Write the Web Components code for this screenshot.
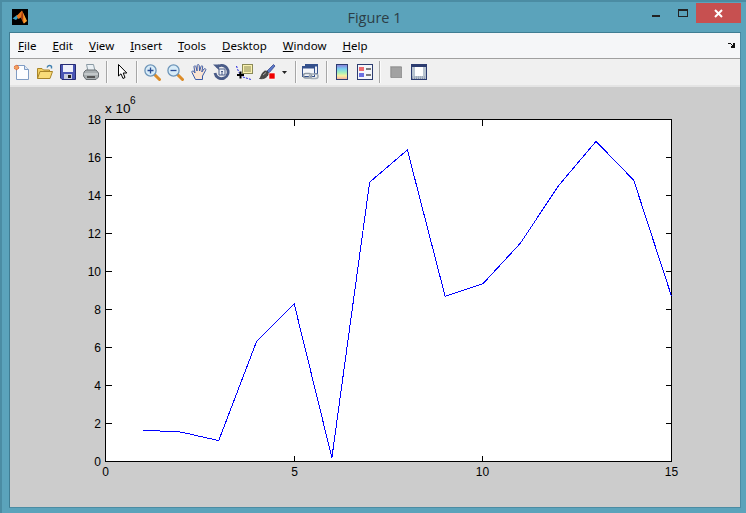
<!DOCTYPE html>
<html>
<head>
<meta charset="utf-8">
<title>Figure 1</title>
<style>
html, body { margin: 0; padding: 0; background: #5ba3bb; }
</style>
</head>
<body>
<figure-window>
  <title-bar slot="title">Figure 1</title-bar>
  <menu-bar slot="menu">
    <menu-item><u>F</u>ile</menu-item>
    <menu-item><u>E</u>dit</menu-item>
    <menu-item><u>V</u>iew</menu-item>
    <menu-item><u>I</u>nsert</menu-item>
    <menu-item><u>T</u>ools</menu-item>
    <menu-item><u>D</u>esktop</menu-item>
    <menu-item><u>W</u>indow</menu-item>
    <menu-item><u>H</u>elp</menu-item>
  </menu-bar>
  <figure-toolbar slot="tools"></figure-toolbar>
  <plot-axes></plot-axes>
</figure-window>

<script>
const windowTemplate = document.createElement('template');
windowTemplate.innerHTML = `
<style>
:host {
  display: flex;
  flex-direction: column;
  box-sizing: border-box;
  width: 746px;
  height: 513px;
  background: #5ba3bb;
  border-top: 2px solid #4b8ca3;
  border-left: 2px solid #4b8ca3;
}
#content {
  display: flex;
  flex-direction: column;
  flex: none;
  width: 730px;
  height: 474px;
  margin-left: 7px;
  border: 1px solid #3f7d93;
  border-right-color: #4b8ca3;
  border-bottom-color: #4b8ca3;
  background: #cccccc;
}
</style>
<slot name="title"></slot>
<div id="content">
  <slot name="menu"></slot>
  <slot name="tools"></slot>
  <slot></slot>
</div>
`;

class FigureWindow extends HTMLElement {
  constructor() {
    super();
    this.shadow = this.attachShadow({ mode: 'open' });
    this.shadow.appendChild(windowTemplate.content.cloneNode(true));
  }
}

const titleTemplate = document.createElement('template');
titleTemplate.innerHTML = `
<style>
:host {
  display: flex;
  flex: none;
  height: 30px;
  font: 14.5px "Open Sans", sans-serif;
  color: #2c3e46;
}
#logo { margin: 7px 0 0 10px; flex: none; }
#caption {
  flex: 1;
  padding: 6px 0 0 84px;
  text-align: center;
  line-height: 20px;
}
#buttons { display: flex; flex: none; height: 20px; margin-top: 1px; margin-right: 5px; }
#minimize { width: 26px; }
#minimize div { width: 8px; height: 2px; margin: 12px 0 0 15px; background: #222; }
#maximize { width: 33px; }
#maximize div { box-sizing: border-box; width: 10px; height: 8px; margin: 6px 0 0 15px; border: 1px solid #222; border-top-width: 2px; }
#close { display: flex; align-items: center; justify-content: center; width: 45px; background: #c75050; }
</style>
<svg id="logo" width="16" height="16" viewBox="0 0 16 16">
  <rect width="16" height="16" fill="#000"/>
  <path d="M0.5 9.5 L5 6 L7.5 7.5 L4 11 Z" fill="#3aa0c4"/>
  <path d="M4.5 7 L10 1.5 L14.5 12 L11.5 14.5 L9 8.5 L6.5 10 Z" fill="#e8781c"/>
  <path d="M10 2 L11.5 7 L10.5 12 L9 8.5 Z" fill="#a83a10"/>
  <path d="M11 3.5 L15 12 L12 14.5 L11.5 8 Z" fill="#f4a030"/>
</svg>
<div id="caption"><slot></slot></div>
<div id="buttons">
  <div id="minimize"><div></div></div>
  <div id="maximize"><div></div></div>
  <div id="close">
    <svg width="9" height="9" viewBox="0 0 9 9"><path d="M1 1 L8 8 M8 1 L1 8" stroke="#fff" stroke-width="2" fill="none"/></svg>
  </div>
</div>
`;

class TitleBar extends HTMLElement {
  constructor() {
    super();
    this.shadow = this.attachShadow({ mode: 'open' });
    this.shadow.appendChild(titleTemplate.content.cloneNode(true));
  }
}

const menuBarTemplate = document.createElement('template');
menuBarTemplate.innerHTML = `
<style>
:host {
  display: flex;
  flex: none;
  box-sizing: border-box;
  height: 26px;
  padding-left: 0;
  align-items: center;
  background: #f5f6f8;
  border-bottom: 1px solid #a0a0a0;
  font: 11.5px "Noto Sans", sans-serif;
  color: #000;
}
#dock { margin-left: auto; margin-right: 5px; }
</style>
<slot></slot>
<svg id="dock" width="7" height="5" viewBox="0 0 7 5">
  <path d="M0 0h3v1h1v1h1v-2h2v5h-4v-2h1v-1h-1v-1h-3z" fill="#111"/>
</svg>
`;

class MenuBar extends HTMLElement {
  constructor() {
    super();
    this.shadow = this.attachShadow({ mode: 'open' });
    this.shadow.appendChild(menuBarTemplate.content.cloneNode(true));
  }
}

const menuItemTemplate = document.createElement('template');
menuItemTemplate.innerHTML = `
<style>
:host { display: block; padding: 0 8px; margin-bottom: 1px; white-space: nowrap; }
</style>
<slot></slot>
`;

class MenuItem extends HTMLElement {
  constructor() {
    super();
    this.shadow = this.attachShadow({ mode: 'open' });
    this.shadow.appendChild(menuItemTemplate.content.cloneNode(true));
  }
}

const toolIconTemplate = document.createElement('template');
toolIconTemplate.innerHTML = `
<style>
:host {
  display: flex;
  flex: none;
  width: 23px;
  height: 26px;
  align-items: center;
  justify-content: center;
}
</style>
<slot></slot>
`;

class ToolIcon extends HTMLElement {
  constructor() {
    super();
    this.shadow = this.attachShadow({ mode: 'open' });
    this.shadow.appendChild(toolIconTemplate.content.cloneNode(true));
  }
}

const toolSepTemplate = document.createElement('template');
toolSepTemplate.innerHTML = `
<style>
:host {
  display: block;
  flex: none;
  box-sizing: border-box;
  width: 2px;
  height: 22px;
  margin: 2px 3px 0 var(--sep-left, 2px);
  background: #a6a6a6;
  border-right: 1px solid #fbfbfb;
}
</style>
`;

class ToolSep extends HTMLElement {
  constructor() {
    super();
    this.shadow = this.attachShadow({ mode: 'open' });
    this.shadow.appendChild(toolSepTemplate.content.cloneNode(true));
  }
}

const toolbarTemplate = document.createElement('template');
toolbarTemplate.innerHTML = `
<style>
:host {
  display: flex;
  flex: none;
  box-sizing: border-box;
  height: 28px;
  background: #f0f0f0;
  border-bottom: 2px solid;
  border-image: linear-gradient(#a0a0a0 50%, #e4e4e4 50%) 2;
}
svg { display: block; }
#bar { display: flex; height: 26px; }
</style>
<div id="bar">
  <!-- new figure -->
  <tool-icon><svg width="17" height="16" viewBox="0 0 17 16">
    <path d="M3.5 1.5 H11.5 L15.5 5.5 V15.5 H3.5 Z" fill="#fcfdff" stroke="#7f9cc4"/>
    <path d="M11.5 1.5 V5.5 H15.5" fill="#dfe8f4" stroke="#7f9cc4"/>
    <circle cx="3.5" cy="3.5" r="2.2" fill="#f0a060" stroke="#e05a28" stroke-dasharray="1.5 .8"/>
  </svg></tool-icon>
  <!-- open -->
  <tool-icon><svg width="16" height="16" viewBox="0 0 16 16">
    <path d="M10 3.5 Q11.5 0.5 14.5 2 M14.5 2 V4.5" fill="none" stroke="#3f7fb0" stroke-width="1.4"/>
    <path d="M0.5 14.5 V4.5 H5 L6.5 6 H12.5 V8" fill="#f2cf60" stroke="#a88428"/>
    <path d="M0.5 14.5 L3 7.5 H15.5 L13 14.5 Z" fill="#f9dc78" stroke="#a88428"/>
  </svg></tool-icon>
  <!-- save -->
  <tool-icon><svg width="16" height="16" viewBox="0 0 16 16">
    <path d="M0.5 0.5 H15.5 V15.5 H2 L0.5 14 Z" fill="#4a55b4" stroke="#262c74"/>
    <rect x="3" y="1" width="10" height="7" fill="#eef0fa"/>
    <rect x="4" y="10" width="8" height="5" fill="#c8cce0"/>
    <rect x="8" y="11" width="3" height="3" fill="#222"/>
  </svg></tool-icon>
  <!-- print -->
  <tool-icon><svg width="16" height="16" viewBox="0 0 16 16">
    <path d="M3.5 0.5 H10.5 L12 7 H5 Z" fill="#eaf0f4" stroke="#8a9aa4"/>
    <path d="M1 8 L3 6 H13 L15.5 9 V13 L13 15.5 H3 L0.5 12 Z" fill="#a8aeb0" stroke="#6a7074"/>
    <path d="M1 10 H15" stroke="#dfe3e4"/>
    <rect x="4" y="12" width="8" height="2" fill="#555"/>
  </svg></tool-icon>
  <tool-sep style="--sep-left: 4px"></tool-sep>
  <!-- edit plot arrow -->
  <tool-icon><svg width="11" height="16" viewBox="0 0 11 16">
    <path d="M1.5 0.5 V12 L4 9.8 L6 14.5 L8 13.5 L6.2 9 H9.8 Z" fill="#fff" stroke="#000"/>
  </svg></tool-icon>
  <tool-sep></tool-sep>
  <!-- zoom in -->
  <tool-icon><svg width="17" height="17" viewBox="0 0 17 17">
    <path d="M10 10 L15.5 15.5" stroke="#dc8c28" stroke-width="3" stroke-linecap="round"/>
    <circle cx="6.5" cy="6.5" r="5.6" fill="#d8ecf8" stroke="#6c94b8" stroke-width="1.3"/>
    <path d="M3.5 6.5 H9.5 M6.5 3.5 V9.5" stroke="#2a4c94" stroke-width="1.3"/>
  </svg></tool-icon>
  <!-- zoom out -->
  <tool-icon><svg width="17" height="17" viewBox="0 0 17 17">
    <path d="M10 10 L15.5 15.5" stroke="#dc8c28" stroke-width="3" stroke-linecap="round"/>
    <circle cx="6.5" cy="6.5" r="5.6" fill="#d8ecf8" stroke="#6c94b8" stroke-width="1.3"/>
    <path d="M3.5 6.5 H9.5" stroke="#2a4c94" stroke-width="1.3"/>
  </svg></tool-icon>
  <!-- pan -->
  <tool-icon><svg width="16" height="16" viewBox="0 0 16 16">
    <path d="M4.5 15.5 L1 8.5 C0.3 7 2 6.5 3 7.5 L4 9 L3 3 C2.8 1.6 4.6 1.4 5 2.8 L6 7 L6.2 1.5 C6.3 0.2 8 0.2 8.2 1.5 L8.6 7 L10 2.5 C10.4 1.2 12 1.7 11.7 3 L10.8 8 L13 5 C13.8 4 15.4 5 14.7 6.2 L11.5 12 V15.5 Z" fill="#fbe4d2" stroke="#3c5ca8"/>
  </svg></tool-icon>
  <!-- rotate 3d -->
  <tool-icon><svg width="17" height="16" viewBox="0 0 17 16">
    <path d="M3.6 3.6 A6.6 6.6 0 1 1 2 9" fill="none" stroke="#4a5c88" stroke-width="2.8"/>
    <path d="M0 0.5 H6 V6 Z" fill="#4a5c88"/>
    <path d="M6 5 H12 V11 H6 Z M8 7.5 H10 M9 7.5 V11" fill="#eef2f8" stroke="#4a5c88"/>
  </svg></tool-icon>
  <!-- data cursor -->
  <tool-icon><svg width="17" height="17" viewBox="0 0 17 17">
    <path d="M0.5 2 C2 7 4 11 7 13 L15 15.5" fill="none" stroke="#2020e0" stroke-dasharray="2 1.2"/>
    <rect x="6.5" y="0.5" width="10" height="9" fill="#fbf2b0" stroke="#8a8a58"/>
    <path d="M8 3 H15 M8 5 H15 M8 7 H15" stroke="#8a8a58"/>
    <path d="M1 11 H8 M4.5 7.5 V14.5" stroke="#000" stroke-width="2"/>
  </svg></tool-icon>
  <!-- brush -->
  <tool-icon><svg width="17" height="16" viewBox="0 0 17 16">
    <path d="M8 7 L14.5 0.5 L16 2 L10 9 Z" fill="#5a78c8" stroke="#2c3c80" stroke-width=".7"/>
    <path d="M0.5 14.5 C2 14 2 10 5 7.5 C7 6 10 8 9.5 10 C8.5 13 5 15.5 0.5 14.5 Z" fill="#4a4a4a" stroke="#222" stroke-width=".7"/>
    <path d="M4 11 L7 8.5" stroke="#aaa"/>
    <rect x="10" y="9" width="6" height="6" fill="#f00000" stroke="#fff" stroke-width=".6"/>
  </svg></tool-icon>
  <tool-icon style="width:11px"><svg width="5" height="3" viewBox="0 0 5 3"><path d="M0 0 H5 L2.5 3 Z" fill="#222"/></svg></tool-icon>
  <tool-sep style="--sep-left: 5px; margin-right: 2px"></tool-sep>
  <!-- link -->
  <tool-icon><svg width="17" height="16" viewBox="0 0 17 16">
    <rect x="3.5" y="0.5" width="12" height="9" fill="#eef2f8" stroke="#34508c"/>
    <rect x="3.5" y="0.5" width="12" height="2" fill="#34508c"/>
    <rect x="0.5" y="2.5" width="12" height="10" fill="#f4f6fa" stroke="#34508c"/>
    <rect x="0.5" y="2.5" width="12" height="2" fill="#34508c"/>
    <rect x="1.5" y="9.5" width="8" height="4.5" rx="2.2" fill="none" stroke="#8c98a4" stroke-width="1.6"/>
    <rect x="7.5" y="10" width="8.5" height="4.5" rx="2.2" fill="none" stroke="#a4aeb8" stroke-width="1.6"/>
  </svg></tool-icon>
  <tool-sep style="--sep-left: 4px; margin-right: 2px"></tool-sep>
  <!-- colorbar -->
  <tool-icon><svg width="12" height="16" viewBox="0 0 12 16">
    <defs><linearGradient id="cbar" x1="0" y1="0" x2="0" y2="1">
      <stop offset="0" stop-color="#8a78d8"/><stop offset=".3" stop-color="#78d0f0"/><stop offset=".55" stop-color="#a8f0b8"/><stop offset=".75" stop-color="#f8f0a0"/><stop offset="1" stop-color="#f8a8a0"/>
    </linearGradient></defs>
    <rect x="0.5" y="0.5" width="11" height="15" fill="url(#cbar)" stroke="#2c3c70"/>
  </svg></tool-icon>
  <!-- legend -->
  <tool-icon><svg width="16" height="16" viewBox="0 0 16 16">
    <rect x="0.5" y="0.5" width="15" height="15" fill="#f4f6fa" stroke="#2c3c70"/>
    <rect x="2" y="3" width="5" height="4" fill="#ee6a70"/>
    <rect x="2" y="9" width="5" height="4" fill="#6a70e0"/>
    <path d="M9 5 H14 M9 11 H14" stroke="#000" stroke-width="1.2"/>
  </svg></tool-icon>
  <tool-sep style="--sep-left: 3px"></tool-sep>
  <!-- hide plot tools -->
  <tool-icon><svg width="12" height="12" viewBox="0 0 12 12">
    <rect x="0" y="0" width="11" height="11" fill="#c4c4c4"/>
    <rect x="1" y="1" width="11" height="11" fill="#a2a2a2" stroke="#8c8c8c" stroke-width=".8"/>
  </svg></tool-icon>
  <!-- show plot tools -->
  <tool-icon><svg width="16" height="16" viewBox="0 0 16 16">
    <rect x="0.5" y="0.5" width="15" height="15" fill="#b8c4d0" stroke="#2c3c70"/>
    <rect x="1" y="1" width="14" height="2" fill="#2c3c70"/>
    <rect x="4" y="3" width="8" height="9" fill="#fff"/>
    <path d="M1 13 H15 M1 14.5 H15" stroke="#8a94a8" stroke-dasharray="1 1"/>
  </svg></tool-icon>
</div>
`;

class FigureToolbar extends HTMLElement {
  constructor() {
    super();
    this.shadow = this.attachShadow({ mode: 'open' });
    this.shadow.appendChild(toolbarTemplate.content.cloneNode(true));
  }
}

const axesTemplate = document.createElement('template');
axesTemplate.innerHTML = `
<style>
:host { display: block; flex: 1; min-height: 0; }
svg { display: block; font: 12px "Liberation Sans", Arial, sans-serif; }
text { fill: #000; }
</style>
<svg id="plot" width="730" height="420" viewBox="10 87 730 420"></svg>
`;

// Same values as read off the reference, in units of 10^6.
const SERIES = [1.65, 1.55, 1.1, 6.3, 8.3, 0.2, 14.7, 16.4, 8.7, 9.35, 11.5, 14.5, 16.85, 14.8, 8.7];

class PlotAxes extends HTMLElement {
  constructor() {
    super();
    this.shadow = this.attachShadow({ mode: 'open' });
    this.shadow.appendChild(axesTemplate.content.cloneNode(true));
  }

  connectedCallback() {
    const left = 105.5, right = 671.5, top = 119.5, bottom = 461.5;
    const xAt = (v) => Math.round(left + (right - left) * v / 15 - 0.5) + 0.5;
    const yAt = (v) => Math.round(bottom - (bottom - top) * v / 18 - 0.5) + 0.5;
    let out = `<rect x="${left}" y="${top}" width="${right - left}" height="${bottom - top}" fill="#fff" stroke="#000" shape-rendering="crispEdges"/>`;
    let ticks = '';
    for (let v = 0; v <= 18; v += 2) {
      const y = yAt(v);
      ticks += `M${left} ${y}h6M${right} ${y}h-6`;
      out += `<text x="101" y="${y + 4}" text-anchor="end">${v}</text>`;
    }
    for (let v = 0; v <= 15; v += 5) {
      const x = xAt(v);
      ticks += `M${x} ${bottom}v-6M${x} ${top}v6`;
      out += `<text x="${x}" y="476" text-anchor="middle">${v}</text>`;
    }
    out += `<path d="${ticks}" stroke="#000" fill="none" shape-rendering="crispEdges"/>`;
    const points = SERIES.map((v, i) => `${left + (right - left) * (i + 1) / 15},${bottom - (bottom - top) * v / 18}`);
    out += `<polyline points="${points.join(' ')}" fill="none" stroke="#0000ff" stroke-width="1" shape-rendering="crispEdges"/>`;
    out += `<text x="105" y="113" font-size="13.5">x 10</text><text x="130" y="104" font-size="10">6</text>`;
    this.shadow.getElementById('plot').innerHTML = out;
  }
}

customElements.define('figure-window', FigureWindow);
customElements.define('title-bar', TitleBar);
customElements.define('menu-bar', MenuBar);
customElements.define('menu-item', MenuItem);
customElements.define('tool-icon', ToolIcon);
customElements.define('tool-sep', ToolSep);
customElements.define('figure-toolbar', FigureToolbar);
customElements.define('plot-axes', PlotAxes);
</script>
</body>
</html>
